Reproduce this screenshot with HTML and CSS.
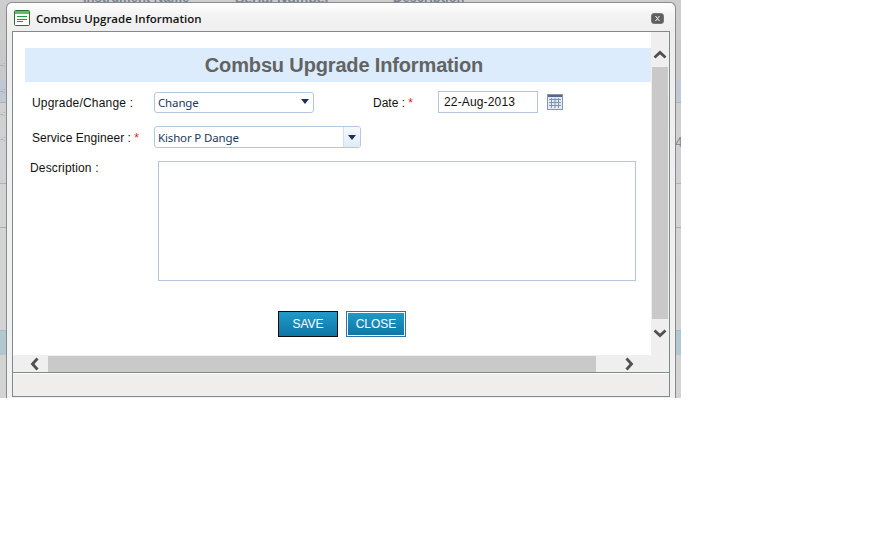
FILE: index.html
```html
<!DOCTYPE html>
<html lang="en">
<head>
<meta charset="utf-8">
<title>Combsu Upgrade Information</title>
<link rel="stylesheet" href="styles.css">
</head>
<body>
<div class="backdrop">
  <div class="bg-heads"><span class="h1">Instrument Name</span><span class="h2">Serial Number</span><span class="h3">Description</span></div>
  <div class="bg-row r1"><span class="bit bit-low">4-:</span></div>
  <div class="bg-row r2"><span class="bit">4-:</span></div>
  <div class="bg-row r3"><span class="bit">4-:</span></div>
  <div class="bg-row r4"><span class="bit">4-:</span><span class="four">4</span></div>
  <div class="bg-row r5"></div>
  <div class="bg-row r6"></div>
  <div class="bg-row r7"></div>
  <div class="bg-row r8"></div>
</div>

<section class="dialog">
  <header class="titlebar">
    <svg class="title-icon" width="16" height="16" viewBox="0 0 16 16">
      <rect x="0.5" y="0.5" width="15" height="15" rx="1" fill="#fff" stroke="#2f6b3a"/>
      <rect x="1" y="1" width="14" height="3" fill="#5cc060"/>
      <path d="M3 6.500h10M3 9.500h10M3 11.500h6" stroke="#1f9a35" stroke-width="1"/>
    </svg>
    <span class="title-text">Combsu Upgrade Information</span>
    <span class="close-x">
      <svg width="13" height="11" viewBox="0 0 13 11"><rect x="0.5" y="0.5" width="12" height="10" rx="2.5" fill="#5f5f5f" stroke="#777"/><path d="M4.5 3l4 5M8.5 3l-4 5" stroke="#fff" stroke-width="1"/></svg>
    </span>
  </header>

  <div class="frame">
    <div class="viewport">
      <div class="content">
        <h1 class="banner">Combsu Upgrade Information</h1>
        <div class="row row-one">
          <label class="label lab-type">Upgrade/Change :</label>
          <div class="combo combo-type">
            <span class="combo-val">Change</span>
            <svg class="caret" width="8" height="5" viewBox="0 0 8 5"><path d="M0 0h8L4 5z" fill="#1c2f55"/></svg>
          </div>
          <label class="label lab-date">Date : <span class="req">*</span></label>
          <input class="date-input" type="text" value="22-Aug-2013">
          <svg class="cal" width="16" height="16" viewBox="0 0 16 16">
            <rect x="0.5" y="0.5" width="15" height="15" fill="#e4eaf3" stroke="#8497b3"/>
            <rect x="1" y="1" width="14" height="2" fill="#52678a"/>
            <path d="M2 5.500h12M2 8.500h12M2 11.500h12M4.500 4v10M8 4v10M11.500 4v10" stroke="#7f93b3" stroke-width="1"/>
          </svg>
        </div>
        <div class="row row-two">
          <label class="label lab-eng">Service Engineer : <span class="req">*</span></label>
          <div class="combo combo-eng">
            <span class="combo-val">Kishor P Dange</span>
            <span class="combo-btn"><svg width="8" height="5" viewBox="0 0 8 5"><path d="M0 0h8L4 5z" fill="#1c2f55"/></svg></span>
          </div>
        </div>
        <div class="row row-desc">
          <label class="label lab-desc">Description :</label>
          <textarea class="desc"></textarea>
        </div>
        <div class="actions">
          <button class="btn btn-save" type="button">SAVE</button>
          <button class="btn btn-close" type="button">CLOSE</button>
        </div>
      </div>
      <div class="vbar">
        <svg class="arrow" width="14" height="9" viewBox="0 0 14 9"><path d="M1.500 7.500L7 2.500l5.500 5" fill="none" stroke="#505050" stroke-width="2.800"/></svg>
        <div class="vthumb"></div>
        <svg class="arrow" width="14" height="9" viewBox="0 0 14 9"><path d="M1.500 1.500L7 6.500l5.500-5" fill="none" stroke="#505050" stroke-width="2.800"/></svg>
      </div>
      <div class="hbar">
        <svg class="harrow-l" width="9" height="14" viewBox="0 0 9 14"><path d="M7.500 1.500L2.500 7l5 5.500" fill="none" stroke="#505050" stroke-width="2.800"/></svg>
        <div class="hthumb"></div>
        <svg class="harrow-r" width="9" height="14" viewBox="0 0 9 14"><path d="M1.500 1.500L6.500 7l-5 5.500" fill="none" stroke="#505050" stroke-width="2.800"/></svg>
      </div>
    </div>
    <div class="status"></div>
  </div>
</section>
</body>
</html>
```
FILE: styles.css
```css
* { box-sizing: border-box; }
html, body { margin: 0; padding: 0; background: #fff; }
body { width: 883px; height: 555px; overflow: hidden; position: relative; font-family: "Liberation Sans", Arial, sans-serif; }

.backdrop { position: absolute; left: 0; top: 0; width: 681px; height: 398px; background: #d2d2d2; display: flex; flex-direction: column; overflow: hidden; }
.bg-heads { height: 40px; background: #cdcdcd; position: relative; color: #7a8494; font-size: 13px; font-weight: bold; }
.bg-heads span { position: absolute; top: -10px; }
.h1 { left: 83px; } .h2 { left: 235px; font-size: 14px; } .h3 { left: 393px; }
.bg-row { position: relative; color: #8e9296; font-size: 8px; line-height: 10px; }
.bit { position: absolute; left: -4px; top: 6px; }
.bit-low { top: 20px; }
.r1 { height: 40px; background: #c8c9cb; }
.r2 { height: 23px; background: #c0c8d4; border-bottom: 1px solid #a3b3c9; }
.r3 { height: 25px; background: #d0d0d0; }
.r4 { height: 56px; background: #cfd1d4; border-bottom: 1px solid #a9b3bf; }
.r5 { height: 44px; background: #d3d3d3; border-bottom: 1px solid #adadad; }
.r6 { height: 102px; background: #d3d3d3; }
.r7 { height: 25px; background: #b1c8cf; border-top: 1px solid #9fc0ca; }
.r8 { height: 43px; background: #d3d3d3; }
.four { position: absolute; right: 0; top: 6px; font-size: 14px; line-height: 16px; color: #8b8b8b; width: 6px; overflow: hidden; }

.dialog { position: absolute; left: 6px; top: 2px; width: 670px; height: 396px; background: linear-gradient(#fff 0, #f3f3f3 12px, #eeeeee 29px, #f1f1f1 100%); border: 1px solid #8a8a8a; border-bottom: 0; border-radius: 6px 6px 0 0; display: flex; flex-direction: column; padding: 0 5px 1px 5px; }
.titlebar { height: 28px; flex: none; display: flex; align-items: center; padding: 2px 6px 0 2px; }
.title-icon { flex: none; }
.title-text { margin-left: 6px; font-family: "Open Sans", "Noto Sans", sans-serif; font-size: 11.5px; font-weight: 600; color: #111; }
.close-x { margin-left: auto; display: flex; }

.frame { flex: 1; border: 1px solid #7f8a8e; display: flex; flex-direction: column; min-height: 0; }
.viewport { height: 340px; flex: none; background: #fff; display: grid; grid-template-columns: 638px 18px; grid-template-rows: 323px 17px; }
.content { padding: 16px 0 0 12px; overflow: hidden; }
.banner { margin: 0; width: 626px; height: 34px; padding-left: 12px; background: #dcecfc; color: #636363; font-size: 20px; font-weight: bold; line-height: 34px; text-align: center; letter-spacing: -0.15px; }
.row { display: flex; }
.row-one { margin-top: 9px; height: 22px; align-items: center; }
.row-two { margin-top: 13px; height: 22px; align-items: center; }
.row-desc { margin-top: 13px; }
.label { font-size: 12px; color: #111; flex: none; }
.req { color: #e8161c; }
.lab-type { margin-left: 7px; width: 122px; padding-top: 1px; letter-spacing: 0.2px; }
.combo { height: 21px; border: 1px solid #b3c7de; border-radius: 3px; background: #fff; display: flex; align-items: center; font-family: "Noto Sans", "Open Sans", sans-serif; font-size: 11.5px; letter-spacing: -0.15px; color: #1e3860; flex: none; }
.combo-val { padding-left: 3px; flex: 1; }
.combo-type { width: 160px; }
.caret { margin-right: 4px; margin-top: -2px; }
.lab-date { margin-left: 59px; width: 65px; padding-top: 1px; }
.date-input { width: 100px; height: 22px; border: 1px solid #b3c7de; padding: 0 5px; font-family: "Liberation Sans", Arial, sans-serif; font-size: 12px; letter-spacing: 0.15px; color: #111; margin: 0; outline: 0; }
.cal { margin-left: 9px; flex: none; }
.lab-eng { margin-left: 7px; width: 122px; padding-top: 1px; letter-spacing: 0.05px; }
.combo-eng { width: 207px; height: 22px; }
.combo-btn { width: 17px; height: 20px; border-left: 1px solid #d3dfee; background: linear-gradient(#f5f8fc, #e2ebf6); display: flex; align-items: center; justify-content: center; border-radius: 0 2px 2px 0; }
.lab-desc { margin-left: 5px; width: 128px; letter-spacing: 0.15px; }
.desc { width: 478px; height: 120px; border: 1px solid #b3c7de; margin: 0; padding: 0; resize: none; outline: 0; display: block; overflow: hidden; }
.actions { margin-top: 30px; margin-left: 253px; display: flex; gap: 8px; }
.btn { width: 60px; height: 26px; padding: 0; font-family: "Liberation Sans", Arial, sans-serif; font-size: 12px; color: #fff; background: linear-gradient(#209bc9, #0f75a7); cursor: pointer; }
.btn-save { border: 1px solid #0c0c0c; }
.btn-close { border: 1px solid #2c75a2; box-shadow: inset 0 0 0 1px #fff; }

.vbar { background: #efefef; display: flex; flex-direction: column; align-items: center; padding: 18px 1px 0 0; }
.vthumb { width: 16px; height: 252px; background: #c9c9c9; margin: 8px 0 10px 0; flex: none; }
.arrow { flex: none; margin-left: 1px; }
.hbar { grid-column: 1 / 3; background: #efefef; display: flex; align-items: center; padding: 0 0 0 17px; }
.harrow-l { flex: none; }
.hthumb { width: 548px; height: 16px; background: #c9c9c9; margin-left: 9px; flex: none; }
.harrow-r { flex: none; margin-left: 29px; }
.status { flex: 1; border-top: 1px solid #7f8a8e; box-shadow: inset 0 1px 0 #fff; background: #f0eded; }
```
